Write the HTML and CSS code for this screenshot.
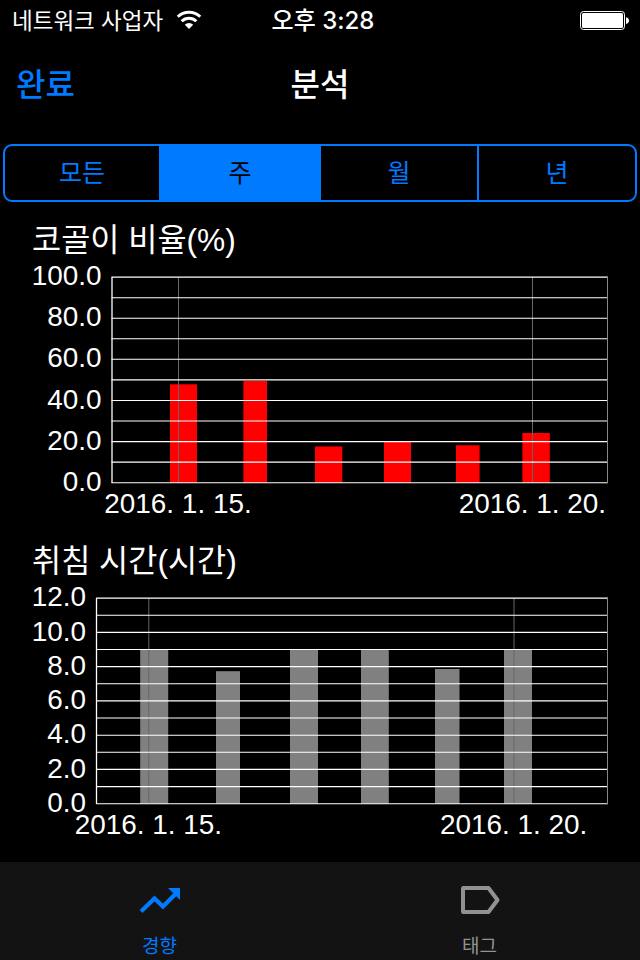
FILE: index.html
```
<!DOCTYPE html>
<html lang="ko">
<head>
  <meta charset="UTF-8">
  <title>분석</title>
  <link rel="stylesheet" href="styles.css">
</head>
<body>
  <div class="status-bar">
    <div class="carrier">
      <span>네트워크 사업자</span>
      <svg class="wifi" width="26" height="20" viewBox="0 0 26 20">
        <path d="M1.8 6.8a16 16 0 0 1 22.4 0" fill="none" stroke="#fff" stroke-width="3"/>
        <path d="M5.7 11.2a10.4 10.4 0 0 1 14.6 0" fill="none" stroke="#fff" stroke-width="3"/>
        <path d="M13 19l-4.2-4.3a6 6 0 0 1 8.4 0z" fill="#fff"/>
      </svg>
    </div>
    <div class="time">오후 3:28</div>
    <svg class="battery" width="50" height="20" viewBox="0 0 50 20">
      <rect x="0.5" y="1.5" width="44" height="18" rx="3" fill="none" stroke="#fff"/>
      <rect x="2" y="3" width="41" height="15" rx="1.5" fill="#fff"/>
      <path d="M46 7.2q3 .8 3 3.4t-3 3.4z" fill="#fff"/>
    </svg>
  </div>
  <div class="nav-bar">
    <a class="done">완료</a>
    <h1 class="nav-title">분석</h1>
    <span></span>
  </div>
  <div class="segments">
    <div class="segment">모든</div>
    <div class="segment selected">주</div>
    <div class="segment">월</div>
    <div class="segment">년</div>
  </div>

  <div class="chart-section">
    <h2 class="chart-title">코골이 비율(%)</h2>
    <svg class="chart" width="640" height="267" viewBox="0 0 640 267">
      <g fill="#ff0000">
        <rect x="170" y="120.3" width="27" height="98.4"/>
        <rect x="243.4" y="117" width="23.6" height="101.7"/>
        <rect x="315" y="182.5" width="27.3" height="36.2"/>
        <rect x="384" y="177.6" width="27" height="41.1"/>
        <rect x="456" y="181.3" width="23.6" height="37.4"/>
        <rect x="522.4" y="169" width="27.4" height="49.7"/>
      </g>
      <path class="marker" d="M178.5 13V218.7M532.5 13V218.7"/>
      <path class="grid" d="M111.5 13.1H608M111.5 33.7H608M111.5 54.2H608M111.5 74.8H608M111.5 95.3H608M111.5 115.9H608M111.5 136.5H608M111.5 157H608M111.5 177.6H608M111.5 198.1H608M111.5 218.7H608"/>
      <path class="axis" d="M112 13V219"/>
      <path class="edge" d="M607.5 13V219"/>
      <g class="y-labels">
        <text x="101.5" y="21">100.0</text>
        <text x="101.5" y="62.1">80.0</text>
        <text x="101.5" y="103.2">60.0</text>
        <text x="101.5" y="144.8">40.0</text>
        <text x="101.5" y="185.9">20.0</text>
        <text x="101.5" y="227">0.0</text>
      </g>
      <g class="x-labels">
        <text x="178" y="249">2016. 1. 15.</text>
        <text x="532.3" y="249">2016. 1. 20.</text>
      </g>
    </svg>
  </div>

  <div class="chart-section">
    <h2 class="chart-title">취침 시간(시간)</h2>
    <svg class="chart" width="640" height="267" viewBox="0 0 640 267">
      <g fill="#808080">
        <rect x="140.2" y="64.5" width="28" height="154.2"/>
        <rect x="216" y="86.2" width="24" height="132.5"/>
        <rect x="290" y="64.5" width="28" height="154.2"/>
        <rect x="361" y="64.5" width="27.8" height="154.2"/>
        <rect x="435" y="84" width="24.5" height="134.7"/>
        <rect x="504" y="64.5" width="28" height="154.2"/>
      </g>
      <path class="marker" d="M148.8 13V218.7M514 13V218.7"/>
      <path class="grid" d="M96 13.1H608M96 30.2H608M96 47.4H608M96 64.5H608M96 81.6H608M96 98.8H608M96 115.9H608M96 133H608M96 150.2H608M96 167.3H608M96 184.4H608M96 201.6H608M96 218.7H608"/>
      <path class="axis" d="M96.5 13V219"/>
      <path class="edge" d="M607.5 13V219"/>
      <g class="y-labels">
        <text x="86" y="21">12.0</text>
        <text x="86" y="56">10.0</text>
        <text x="86" y="90">8.0</text>
        <text x="86" y="124">6.0</text>
        <text x="86" y="158">4.0</text>
        <text x="86" y="193">2.0</text>
        <text x="86" y="227">0.0</text>
      </g>
      <g class="x-labels">
        <text x="148.3" y="249">2016. 1. 15.</text>
        <text x="513.7" y="249">2016. 1. 20.</text>
      </g>
    </svg>
  </div>

  <div class="tab-bar">
    <div class="tab active">
      <svg width="44" height="32" viewBox="0 0 44 32">
        <path d="M3 27.5L16.5 14.5L25 22.5L38 9.5" fill="none" stroke="#007aff" stroke-width="4.2"/>
        <path d="M30 4H42V16z" fill="#007aff"/>
      </svg>
      <span>경향</span>
    </div>
    <div class="tab">
      <svg width="44" height="32" viewBox="0 0 44 32">
        <path d="M5.5 4H30.5L39.5 16L30.5 28H5.5Q5 28 5 27.5V4.5Q5 4 5.5 4z" fill="none" stroke="#929292" stroke-width="4" stroke-linejoin="round"/>
      </svg>
      <span>태그</span>
    </div>
  </div>
</body>
</html>
```
FILE: styles.css
```
body {
  margin: 0;
  width: 640px;
  height: 960px;
  overflow: hidden;
  display: flex;
  flex-direction: column;
  background: #000;
  color: #fff;
  font-family: "Noto Sans CJK KR", sans-serif;
}
.status-bar {
  display: grid;
  grid-template-columns: 1fr auto 1fr;
  align-items: center;
  height: 40px;
  padding: 0 10px 0 12px;
  box-sizing: border-box;
}
.carrier {
  display: flex;
  align-items: center;
  gap: 13px;
  font-size: 22.5px;
  font-weight: 400;
  line-height: 36px;
}
.carrier span {
  padding-bottom: 2px;
}
.time {
  padding-left: 4px;
  font-family: Inter, "Noto Sans CJK KR", sans-serif;
  font-size: 24px;
  font-weight: 500;
  line-height: 38px;
  padding-top: 2px;
}
.battery {
  justify-self: end;
}
.nav-bar {
  display: grid;
  grid-template-columns: 1fr auto 1fr;
  height: 88px;
  padding: 0 16px;
  line-height: 84px;
}
.done {
  color: #007aff;
  font-size: 32px;
  font-weight: 500;
}
.nav-title {
  margin: 0;
  font-size: 32px;
  font-weight: 500;
}
.segments {
  display: flex;
  height: 58px;
  margin: 16px 3px 8px;
  box-sizing: border-box;
  border: 2px solid #007aff;
  border-radius: 9px;
  overflow: hidden;
}
.segment {
  flex: 1;
  color: #007aff;
  font-size: 25px;
  font-weight: 400;
  line-height: 50px;
  text-align: center;
}
.segment:first-child {
  flex: 0 0 154px;
}
.segment + .segment {
  border-left: 2px solid #007aff;
}
.segment.selected {
  flex: 0 0 158px;
  background: #007aff;
  color: #000;
}
.chart-section {
  height: 321px;
}
.chart-title {
  margin: 0;
  padding-left: 32px;
  height: 54px;
  font-family: "Liberation Sans", "Noto Sans CJK KR", sans-serif;
  font-size: 31.7px;
  font-weight: 400;
  line-height: 60px;
}
.chart {
  display: block;
  overflow: visible;
}
.marker {
  stroke: #666;
  stroke-width: 1;
}
.grid {
  stroke: #fff;
  stroke-width: 1.1;
}
.axis {
  stroke: #fff;
  stroke-width: 1.3;
}
.edge {
  stroke: #888;
}
.y-labels,
.x-labels {
  fill: #fff;
  font-family: "Liberation Sans", Arial, sans-serif;
  font-size: 27.9px;
}
.y-labels {
  text-anchor: end;
}
.x-labels {
  text-anchor: middle;
}
.tab-bar {
  display: flex;
  height: 98px;
  margin-top: auto;
  background: #131313;
}
.tab {
  flex: 1;
  display: flex;
  flex-direction: column;
  align-items: center;
  padding-top: 22px;
  padding-right: 1px;
  color: #929292;
  font-size: 19px;
  font-weight: 400;
  line-height: 58px;
}
.tab svg {
  flex-shrink: 0;
}
.tab.active {
  color: #007aff;
}
```
